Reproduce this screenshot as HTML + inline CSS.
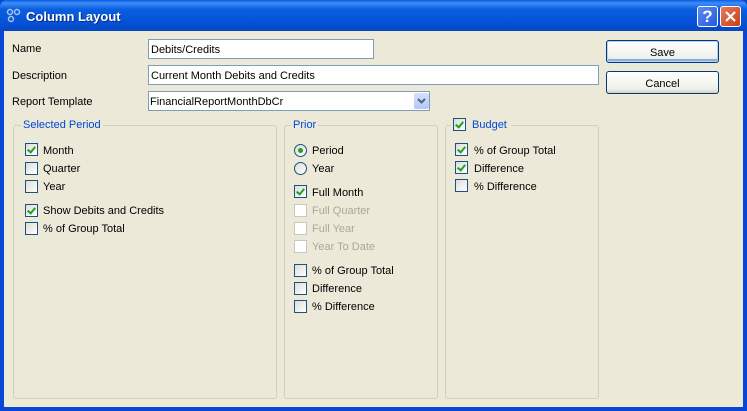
<!DOCTYPE html>
<html><head><meta charset="utf-8"><style>
*{box-sizing:border-box;margin:0;padding:0}
body{width:747px;height:411px;overflow:hidden;background:#0846d8;font-family:"Liberation Sans",sans-serif;font-size:11px;color:#000;position:relative}
.title{position:absolute;left:0;top:0;width:747px;height:31px;border-radius:7px 7px 0 0;background:linear-gradient(#0a5ee6 0%,#3d8cf5 10%,#0a5ee0 30%,#0553d8 70%,#0747c4 100%)}
.tt{position:absolute;left:26px;top:9px;color:#fff;font-weight:bold;font-size:13px;text-shadow:1px 1px #0a2a7a}
.client{position:absolute;left:4px;top:31px;width:739px;height:376px;background:#ece9d8}
.a{position:absolute;white-space:nowrap;margin-top:1px}
.inp{position:absolute;background:#fff;border:1px solid #7f9db9;height:20px;padding:4px 0 0 2px}
.btn{position:absolute;left:606px;width:113px;height:23px;border:1px solid #003c74;border-radius:3px;background:linear-gradient(#fff,#f0f0ea 80%,#d6d0c5);text-align:center;padding-top:5px}
.grp{position:absolute;border:1px solid #d0d0bf;border-radius:3px}
.gl{position:absolute;background:#ece9d8;color:#0046d5;padding:0 2px;white-space:nowrap;margin-top:1px}
.cb{position:absolute;width:13px;height:13px;border:1px solid #1c5180;background:linear-gradient(135deg,#dcdcd7,#fff)}
.cb.d{border-color:#cac8bb;background:#fff}
.cb.c::after{content:"";position:absolute;left:3px;top:1px;width:3px;height:6px;border:solid #21a121;border-width:0 2px 2px 0;transform:rotate(40deg)}
.rb{position:absolute;width:13px;height:13px;border:1px solid #1c5180;border-radius:50%;background:linear-gradient(135deg,#dcdcd7,#fff)}
.rb.c::after{content:"";position:absolute;left:3px;top:3px;width:5px;height:5px;border-radius:50%;background:#21a121}
.dis{color:#aca899}
</style></head><body>
<div class="title">
<svg style="position:absolute;left:5px;top:7px" width="18" height="18" viewBox="0 0 18 18"><g fill="none" stroke="#a8c4f0" stroke-width="1.5"><circle cx="5" cy="5" r="2.5"/><circle cx="12" cy="5" r="2.5"/><circle cx="6" cy="12" r="2.5"/></g></svg>
<div class="tt">Column Layout</div>
<div style="position:absolute;left:697px;top:6px;width:21px;height:21px;border:1px solid #fff;border-radius:3px;background:linear-gradient(135deg,#5a8cf5,#2659d8);color:#fff;font-weight:bold;font-size:17px;text-align:center;line-height:19px">?</div>
<div style="position:absolute;left:720px;top:6px;width:21px;height:21px;border:1px solid #fff;border-radius:3px;background:linear-gradient(135deg,#e8795a,#c8401c)"><svg width="19" height="19"><path d="M5 5L14 14M14 5L5 14" stroke="#fff" stroke-width="2.2"/></svg></div>
</div>
<div class="client"></div>
<div class="a" style="left:12px;top:42px">Name</div>
<div class="inp" style="left:148px;top:39px;width:226px">Debits/Credits</div>
<div class="a" style="left:12px;top:69px">Description</div>
<div class="inp" style="left:148px;top:65px;width:451px">Current Month Debits and Credits</div>
<div class="a" style="left:12px;top:95px">Report Template</div>
<div class="inp" style="left:148px;top:91px;width:282px;padding-left:1px">FinancialReportMonthDbCr</div>
<div style="position:absolute;left:414px;top:93px;width:15px;height:16px;border-radius:2px;background:linear-gradient(#d4e0fc,#b4c8f8)"><svg width="15" height="16"><path d="M4 6L7.5 9.5L11 6" fill="none" stroke="#4d6185" stroke-width="2"/></svg></div>
<div class="btn" style="top:40px;box-shadow:inset 0 0 0 1px #b8d0f4,inset 0 -2px 0 1px #89ade4;padding-top:6px">Save</div>
<div class="btn" style="top:71px;padding-top:6px">Cancel</div>

<div class="grp" style="left:13px;top:125px;width:264px;height:274px"></div>
<div class="gl" style="left:21px;top:118px">Selected Period</div>
<div class="cb c" style="left:25px;top:143px"></div><div class="a" style="left:43px;top:144px">Month</div>
<div class="cb" style="left:25px;top:162px"></div><div class="a" style="left:43px;top:162px">Quarter</div>
<div class="cb" style="left:25px;top:180px"></div><div class="a" style="left:43px;top:180px">Year</div>
<div class="cb c" style="left:25px;top:204px"></div><div class="a" style="left:43px;top:204px">Show Debits and Credits</div>
<div class="cb" style="left:25px;top:222px"></div><div class="a" style="left:43px;top:222px">% of Group Total</div>

<div class="grp" style="left:284px;top:125px;width:154px;height:274px"></div>
<div class="gl" style="left:291px;top:118px">Prior</div>
<div class="rb c" style="left:294px;top:144px"></div><div class="a" style="left:312px;top:144px">Period</div>
<div class="rb" style="left:294px;top:162px"></div><div class="a" style="left:312px;top:162px">Year</div>
<div class="cb c" style="left:294px;top:185px"></div><div class="a" style="left:312px;top:186px">Full Month</div>
<div class="cb d" style="left:294px;top:204px"></div><div class="a dis" style="left:312px;top:204px">Full Quarter</div>
<div class="cb d" style="left:294px;top:222px"></div><div class="a dis" style="left:312px;top:222px">Full Year</div>
<div class="cb d" style="left:294px;top:240px"></div><div class="a dis" style="left:312px;top:240px">Year To Date</div>
<div class="cb" style="left:294px;top:264px"></div><div class="a" style="left:312px;top:264px">% of Group Total</div>
<div class="cb" style="left:294px;top:282px"></div><div class="a" style="left:312px;top:282px">Difference</div>
<div class="cb" style="left:294px;top:300px"></div><div class="a" style="left:312px;top:300px">% Difference</div>

<div class="grp" style="left:445px;top:125px;width:154px;height:274px"></div>
<div class="gl" style="left:451px;top:117px;width:60px;height:14px"></div>
<div class="cb c" style="left:453px;top:118px"></div><div class="a" style="left:472px;top:118px;color:#0046d5">Budget</div>
<div class="cb c" style="left:455px;top:143px"></div><div class="a" style="left:474px;top:144px">% of Group Total</div>
<div class="cb c" style="left:455px;top:161px"></div><div class="a" style="left:474px;top:162px">Difference</div>
<div class="cb" style="left:455px;top:179px"></div><div class="a" style="left:474px;top:180px">% Difference</div>
</body></html>
